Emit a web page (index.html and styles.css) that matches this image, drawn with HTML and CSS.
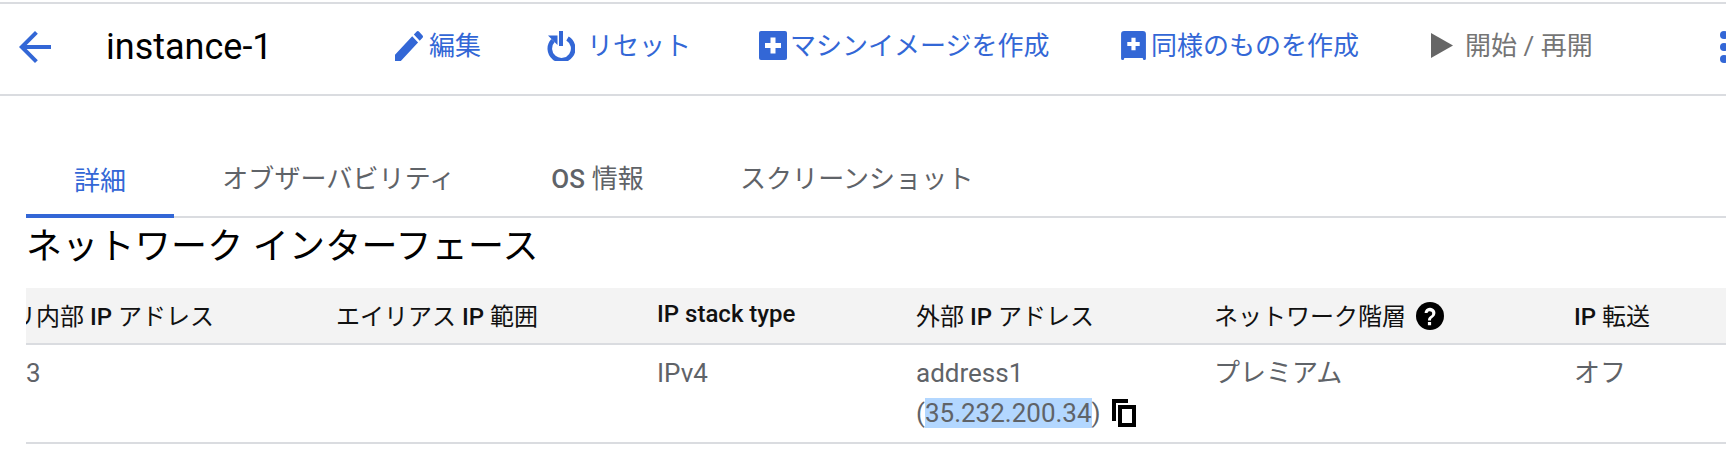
FILE: index.html
```html
<!DOCTYPE html>
<html lang="ja">
<head>
    <meta charset="UTF-8">
    <title>instance-1</title>
    <link rel="stylesheet" href="styles.css">
</head>
<body>
    <div class="toolbar">
        <svg class="back-icon" viewBox="0 0 24 24"><path d="M20 11H7.83l5.59-5.59L12 4l-8 8 8 8 1.41-1.41L7.83 13H20v-2z"/></svg>
        <h1 class="title">instance-1</h1>
        <div class="actions">
            <a class="action action-edit">
                <svg class="icon-edit" viewBox="3 3 18 18" preserveAspectRatio="none"><path d="M3 17.25V21h3.75L17.81 9.94l-3.75-3.75L3 17.25zM20.71 7.04c.39-.39.39-1.02 0-1.41l-2.34-2.34c-.39-.39-1.02-.39-1.41 0l-1.83 1.83 3.75 3.75 1.83-1.83z"/></svg>
                編集
            </a>
            <a class="action action-reset">
                <svg class="icon-reset" viewBox="0 0 28 30"><path class="ring" d="M6 9.5A11.7 11.7 0 1 0 20.5 7.5"/><path d="M12 0h4v15h-4zM1 4.5h9.5V14z"/></svg>
                リセット
            </a>
            <a class="action action-image">
                <svg class="icon-image" viewBox="0 0 28 29"><rect width="28" height="29" rx="2"/><path class="plus" d="M11.5 6.500h5v5.500H22v5h-5.500v5.500h-5V17H6v-5h5.500z"/></svg>
                マシンイメージを作成
            </a>
            <a class="action action-clone">
                <svg class="icon-clone" viewBox="0 0 24 28"><path d="M3 0h18a3 3 0 0 1 3 3v23.5a1.5 1.5 0 0 1-3 0V26H3v.5a1.5 1.5 0 0 1-3 0V3a3 3 0 0 1 3-3z"/><path class="plus" d="M10 6.500h4v4h4v4h-4v4h-4v-4H6v-4h4z"/></svg>
                同様のものを作成
            </a>
            <a class="action action-start">
                <svg class="icon-play" viewBox="0 0 22 25"><path d="M0 0l22 12.5L0 25z"/></svg>
                開始 / 再開
            </a>
        </div>
        <div class="more"><i></i><i></i><i></i></div>
    </div>

    <div class="content">
        <div class="tabs">
            <a class="tab active">詳細</a>
            <a class="tab">オブザーバビリティ</a>
            <a class="tab"><b>OS</b> 情報</a>
            <a class="tab">スクリーンショット</a>
        </div>

        <h2 class="section-title">ネットワーク インターフェース</h2>

        <div class="table">
            <div class="row head">
                <div class="cell col-internal"><span class="cut">リ</span>内部 <b>IP</b> アドレス</div>
                <div class="cell col-alias">エイリアス <b>IP</b> 範囲</div>
                <div class="cell col-stack"><b>IP stack type</b></div>
                <div class="cell col-external">外部 <b>IP</b> アドレス</div>
                <div class="cell col-tier">ネットワーク階層
                    <svg class="icon-help" viewBox="0 0 28 28"><circle cx="14" cy="14" r="14"/><path class="mark" d="M8.600 11a5.400 5.200 0 1 1 8.200 4.400c-1.500 1-1.800 1.600-1.800 3h-3c0-2.300.6-3.200 2.500-4.500a2.400 2.400 0 1 0-3-2.900zM11.900 20h3.200v3.200h-3.200z"/></svg>
                </div>
                <div class="cell col-forward"><b>IP</b> 転送</div>
            </div>
            <div class="row body">
                <div class="cell col-internal">3</div>
                <div class="cell col-alias"></div>
                <div class="cell col-stack">IPv4</div>
                <div class="cell col-external">
                    address1<br>
                    (<span class="selected">35.232.200.34</span>)
                    <svg class="icon-copy" viewBox="0 0 24 28"><path d="M0 0h16v4H4v18H0z"/><path fill-rule="evenodd" d="M6 6h18v22H6zM10 10v14h10V10z"/></svg>
                </div>
                <div class="cell col-tier">プレミアム</div>
                <div class="cell col-forward">オフ</div>
            </div>
        </div>
    </div>
</body>
</html>
```

FILE: styles.css
```css
html, body {
    margin: 0;
    padding: 0;
    height: 100%;
    overflow: hidden;
    background: white;
}
body {
    font-family: Roboto, "Noto Sans CJK JP", sans-serif;
    font-size: 26px;
    color: #5f6368;
}
.toolbar {
    display: flex;
    align-items: center;
    height: 90px;
    box-sizing: content-box;
    margin-top: 2px;
    border-top: 2px solid #dadce0;
    border-bottom: 2px solid #dadce0;
    overflow: hidden;
    position: relative;
}
.back-icon {
    width: 48px;
    height: 48px;
    margin: 0 0 5px 11px;
    fill: #3367d6;
    flex: none;
}
.title {
    margin: 0 0 5px 47px;
    width: 289px;
    flex: none;
    font-size: 36px;
    font-weight: 400;
    color: #000;
}
.actions {
    display: flex;
    align-items: center;
    flex: none;
    margin-bottom: 11px;
}
.action {
    display: flex;
    align-items: center;
    color: #3367d6;
    white-space: nowrap;
    flex: none;
}
.action svg {
    fill: #3367d6;
    flex: none;
    margin-top: 4px;
}
.action-edit { width: 152px; }
.action-reset { width: 212px; }
.action-image { width: 362px; }
.action-clone { width: 310px; }
.action-start { color: #757575; }
.icon-edit {
    width: 28px;
    height: 30px;
    margin-right: 6px;
}
.icon-reset {
    width: 28px;
    height: 30px;
    margin-right: 12px;
}
.icon-reset .ring {
    fill: none;
    stroke: #3367d6;
    stroke-width: 4.6;
}
.icon-image {
    width: 28px;
    height: 29px;
    margin-right: 3px;
}
.icon-clone {
    width: 25px;
    height: 29px;
    margin-right: 5px;
}
.action .plus { fill: white; }
.action .icon-play {
    width: 22px;
    height: 25px;
    margin-right: 12px;
    fill: #666;
}
.more {
    position: absolute;
    left: 1720px;
    top: 27px;
    display: flex;
    flex-direction: column;
    gap: 4px;
}
.more i {
    display: block;
    width: 8px;
    height: 8px;
    border-radius: 50%;
    background: #3367d6;
}
.content {
    margin-left: 26px;
}
.tabs {
    display: flex;
    height: 122px;
    align-items: flex-end;
    border-bottom: 2px solid #dadce0;
    box-sizing: border-box;
}
.tab {
    padding: 0 48px 23px;
    height: 55px;
    box-sizing: border-box;
    line-height: 36px;
    letter-spacing: 0.1px;
    white-space: nowrap;
}
.tab b { font-weight: 500; }
.tab.active {
    color: #3367d6;
    border-bottom: 4px solid #3367d6;
    margin-bottom: -2px;
    padding-bottom: 19px;
}
.section-title {
    margin: 0;
    height: 70px;
    line-height: 58px;
    font-size: 36px;
    letter-spacing: 0.25px;
    font-weight: 400;
    color: #000;
    white-space: nowrap;
}
.table {
    overflow: hidden;
}
.row {
    display: flex;
    border-bottom: 2px solid #dadce0;
}
.row.head {
    height: 57px;
    padding-bottom: 3px;
    box-sizing: border-box;
    background: #f3f3f3;
    font-size: 24px;
    color: #111;
    align-items: center;
}
.row.head b { font-weight: 500; }
.row.body {
    height: 99px;
    padding-top: 8px;
    box-sizing: border-box;
    line-height: 40px;
}
.cell {
    flex: none;
    white-space: nowrap;
}
.col-internal { width: 310px; }
.col-alias { width: 321px; }
.col-stack { width: 259px; }
.col-external { width: 298px; }
.col-tier { width: 360px; }
.cut {
    margin-left: -14px;
}
.icon-help {
    width: 28px;
    height: 28px;
    margin-left: 4px;
    vertical-align: -5px;
    fill: #000;
}
.icon-help .mark { fill: white; }
.selected {
    background: #b3d7ff;
}
.icon-copy {
    width: 24px;
    height: 28px;
    margin-left: 5px;
    vertical-align: -5px;
    fill: #000;
}
```
